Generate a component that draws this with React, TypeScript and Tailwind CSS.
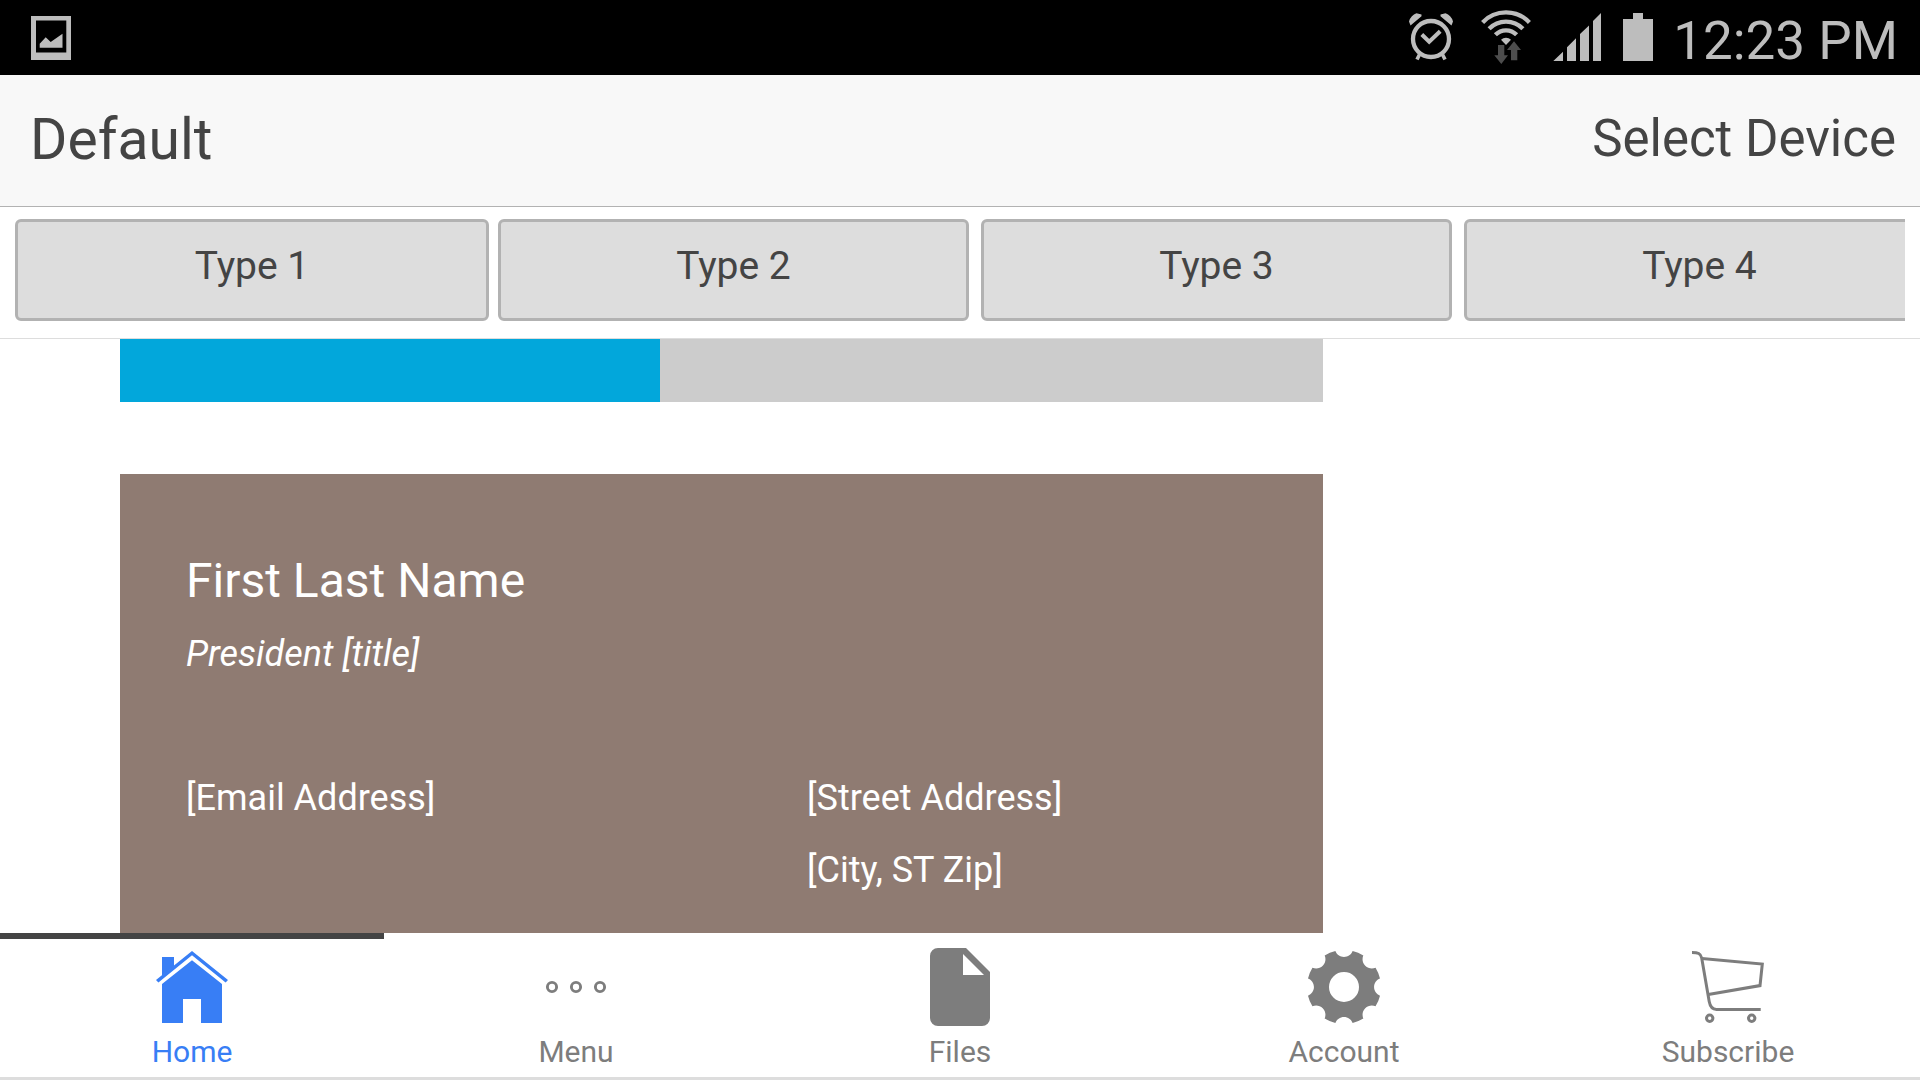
import React, { useState } from 'react';

const types = ['Type 1', 'Type 2', 'Type 3', 'Type 4'];

const HomeIcon = () => (
  <svg viewBox="0 0 96 96" className="size-24" fill="currentColor" aria-hidden="true">
    <path d="M18 18h12v9.2L18 37z" />
    <path d="M48 12l36 29-2.4 2.6L48 16.2 14.4 43.6 12 41z" />
    <path d="M48 21.3L78 45v39H57V60H39v24H18V45z" />
  </svg>
);

const MenuIcon = () => (
  <svg viewBox="0 0 96 96" className="size-24" fill="none" stroke="currentColor" strokeWidth="2.9" aria-hidden="true">
    <circle cx="24" cy="48" r="4.6" />
    <circle cx="48" cy="48" r="4.6" />
    <circle cx="72" cy="48" r="4.6" />
  </svg>
);

const FileIcon = () => (
  <svg viewBox="0 0 96 96" className="size-24" fill="currentColor" fillRule="evenodd" aria-hidden="true">
    <path d="M26 9h28l24 24v46a8 8 0 0 1-8 8H26a8 8 0 0 1-8-8V17a8 8 0 0 1 8-8zM51 15v21h21z" />
  </svg>
);

const GearIcon = () => (
  <svg viewBox="0 0 512 512" className="size-24" fill="currentColor" fillRule="evenodd" aria-hidden="true">
    <path d="M416.3 256c0-21 13.2-38.9 31.7-46a196.3 196.3 0 0 0-23.7-57.1 49.4 49.4 0 0 1-20.1 4.2c-12.6 0-25.2-4.8-34.9-14.4-14.9-14.9-18.2-36.9-10.2-55A196.2 196.2 0 0 0 302 64c-7 18.5-25 31.7-46 31.7S217 82.5 210 64a196.2 196.2 0 0 0-57.1 23.7c8 18.1 4.7 40.1-10.2 55-9.6 9.6-22.3 14.4-34.9 14.4a49.4 49.4 0 0 1-20.1-4.2A196.3 196.3 0 0 0 64 210c18.5 7.1 31.7 25 31.7 46S82.5 295 64 302.1a196.3 196.3 0 0 0 23.7 57.1 49.4 49.4 0 0 1 20-4.2c12.6 0 25.2 4.8 34.9 14.4 14.8 14.8 18.2 36.8 10.2 54.9A196.3 196.3 0 0 0 210 448c7.1-18.5 25-31.6 46-31.6s38.9 13.1 46 31.6a196.2 196.2 0 0 0 57.1-23.7c-8-18.1-4.6-40 10.2-54.9 9.6-9.6 22.2-14.4 34.9-14.4 6.8 0 13.7 1.4 20 4.2A196.3 196.3 0 0 0 448 302.1c-18.5-7.1-31.7-25.1-31.7-46.1zM256 336a80 80 0 1 1 0-160 80 80 0 0 1 0 160z" />
  </svg>
);

const CartIcon = () => (
  <svg viewBox="0 0 96 96" className="size-24" fill="none" stroke="currentColor" strokeWidth="3" aria-hidden="true">
    <path d="M12 13.4C18 13.4 20.7 14.5 21.7 19L29.2 62.5C30.2 68 32.5 70.4 36.5 70.4H80.7" />
    <path d="M22 19.4L82.3 25 80 46.6 28.3 55.4" />
    <circle cx="29.7" cy="79.3" r="3.2" />
    <circle cx="71.7" cy="79.3" r="3.2" />
  </svg>
);

const tabs = [
  { name: 'Home', icon: <HomeIcon /> },
  { name: 'Menu', icon: <MenuIcon /> },
  { name: 'Files', icon: <FileIcon /> },
  { name: 'Account', icon: <GearIcon /> },
  { name: 'Subscribe', icon: <CartIcon /> },
];

const StatusBar = () => (
  <div className="flex h-[75px] shrink-0 items-center justify-between bg-black pr-[22px] pl-[31px] text-[#bdbdbd]">
    <svg viewBox="0 0 40 44" className="h-11 w-10" fill="currentColor" aria-hidden="true">
      <path fillRule="evenodd" d="M0 0h40v44H0zM5 4.5v32h30.3v-32z" />
      <path d="M8.7 31.8v-4l6-6.6 5 4.8 11.8-8.3v14.100z" />
    </svg>
    <div className="flex items-center gap-5">
      <div className="flex items-center gap-[22px] pb-[2px]">
        {/* alarm */}
        <svg viewBox="0 0 50 48" className="h-12 w-[50px]" fill="none" stroke="currentColor" aria-hidden="true">
          <circle cx="22" cy="26" r="18" strokeWidth="4.3" />
          <path d="M12.8 21.5l7.4 7.2L31.2 18.3" strokeWidth="4" />
          <path d="M10.5 41.5l-2.5 5M33.5 41.5l2.5 5" strokeWidth="3.6" />
          <path
            d="M1.5 12.5L0 8.5Q2 2 7.5.3L12.5 1.5V3.3zM42.5 12.5L44 8.5Q42 2 36.5.3L31.5 1.5V3.3z"
            fill="currentColor"
            stroke="none"
          />
        </svg>
        {/* wifi with the traffic arrows */}
        <svg viewBox="0 0 50 54" className="h-[54px] w-[50px]" fill="none" stroke="currentColor" strokeWidth="4.3" aria-hidden="true">
          <path d="M1.6 12.4a32.5 32.5 0 0 1 46.8 0M8.1 18.7a23.5 23.5 0 0 1 33.8 0M14.4 24.8a14.7 14.7 0 0 1 21.2 0" />
          <path d="M25 35l-5-5.2a7.2 7.2 0 0 1 10 0z" fill="currentColor" stroke="none" />
          <path d="M17 35h6.3v10.3H27L20.3 54l-7-8.7H17zM33 31.3L40 40h-3.7v10.3H30V40h-4z" fill="#4d4d4d" stroke="none" />
        </svg>
        {/* signal */}
        <svg viewBox="0 0 48 48" className="size-12" fill="currentColor" aria-hidden="true">
          <path d="M.3 48L10 38.7V48zM14 48V34.3l9-9V48zM27 48V21l9-8.5V48zM40 48V8l8-8v48z" />
        </svg>
        {/* battery */}
        <svg viewBox="0 0 30 48" className="h-12 w-[30px]" fill="currentColor" aria-hidden="true">
          <path d="M10 0h10v6h10v42H0V6h10z" />
        </svg>
      </div>
      <time className="pt-[6px] text-[53px] leading-[60px]">12:23 PM</time>
    </div>
  </div>
);

const App = () => {
  const [active, setActive] = useState('Home');

  return (
    <div className="flex h-screen flex-col overflow-hidden bg-white font-['Roboto',sans-serif] text-[#444]">
      <StatusBar />

      <header className="flex h-[132px] shrink-0 items-center justify-between border-b border-[#b2b2b2] bg-[#f8f8f8] pr-6 pb-[2px] pl-[30px]">
        <h1 className="text-[57px] leading-[72px]">Default</h1>
        <button type="button" className="pb-[2px] text-[51px] leading-[72px]">Select Device</button>
      </header>

      <div className="shrink-0 border-b border-[#ddd] px-[15px] pt-3 pb-[17px]">
        <div className="flex gap-3 overflow-hidden">
          {types.map((type) => (
            <button
              key={type}
              type="button"
              className="w-[471px] shrink-0 rounded-md border-3 border-[#b2b2b2] bg-[#ddd] pb-[8px] text-[39px] leading-[88px] first:-mr-[3px] first:w-[474px]"
            >
              {type}
            </button>
          ))}
        </div>
      </div>

      <main className="min-h-0 flex-1 overflow-hidden pl-[120px]">
        <div className="flex h-[63px] w-full max-w-[1203px] bg-[#ccc]">
          <div className="w-[540px] bg-[#02a7db]" />
        </div>

        <div className="mt-[72px] w-full max-w-[1203px] bg-[#8f7b72] px-[66px] py-[72px] text-4xl leading-[72px] text-white">
          <h2 className="pb-[2px] text-5xl leading-[70px]">First Last Name</h2>
          <p className="italic leading-[72px]">President [title]</p>
          <div className="mt-[72px] grid grid-cols-[621px_1fr] leading-[72px]">
            <p>[Email Address]</p>
            <div>
              <p>[Street Address]</p>
              <p>[City, ST Zip]</p>
            </div>
          </div>
        </div>
      </main>

      <nav className="flex shrink-0 border-b-3 border-[#ddd] bg-white">
        {tabs.map((tab) => (
          <button
            key={tab.name}
            type="button"
            onClick={() => setActive(tab.name)}
            className={
              active === tab.name
                ? 'flex flex-1 flex-col items-center border-t-6 border-[#444] pb-[9px] text-[30px] leading-[33px] text-[#387ef5]'
                : 'flex flex-1 flex-col items-center border-t-6 border-transparent pb-[9px] text-[30px] leading-[33px] text-[#7d7d7d]'
            }
          >
            {tab.icon}
            <span>{tab.name}</span>
          </button>
        ))}
      </nav>
    </div>
  );
};

export default App;
